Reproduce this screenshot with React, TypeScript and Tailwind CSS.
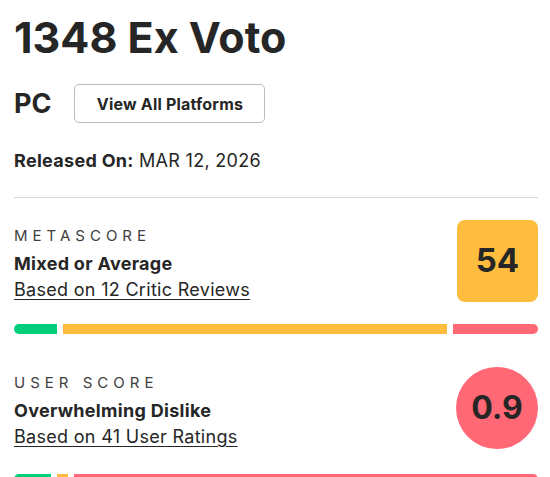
import { memo } from 'react';

const font = { fontFamily: 'Inter, "Open Sans", sans-serif' };

function ScoreBar({ parts }: { parts: { grow: string; color: string }[] }) {
  return (
    <div className="flex h-[10px] gap-[6px] overflow-hidden rounded-full">
      {parts.map((p, i) => (
        <div key={i} className={`${p.grow} ${p.color} h-full`} />
      ))}
    </div>
  );
}

function App() {
  return (
    <div className="min-h-screen bg-white pl-[14px] pr-[12px] pt-[13px] text-[#262626]" style={font}>
      <h1 className="text-[43px] font-bold leading-[48px]">1348 Ex Voto</h1>

      <div className="mt-[23px] flex items-center gap-[23px]">
        <span className="text-[27px] font-bold leading-[32px]">PC</span>
        <button className="h-[39px] w-[191px] rounded-[5px] border border-[#bdbdbd] text-[16px] font-bold tracking-[0.2px] text-[#262626]">
          View All Platforms
        </button>
      </div>

      <div className="mt-[26px] text-[18px] leading-[24px] tracking-[0.3px]">
        <span className="font-bold">Released On:</span> MAR 12, 2026
      </div>

      <div className="mt-[24px] h-px bg-[#d8d8d8]" />

      {/* metascore */}
      <div className="mt-[22px] flex items-start justify-between">
        <div className="pt-[6px]">
          <div className="text-[15px] leading-[20px] tracking-[5px] text-[#404040]">METASCORE</div>
          <div className="mt-[6px] text-[18px] font-bold leading-[24px] tracking-[0.3px]">Mixed or Average</div>
          <a className="mt-[2px] block text-[18px] leading-[24px] tracking-[0.3px] underline underline-offset-[3px]">
            Based on 12 Critic Reviews
          </a>
        </div>
        <div className="flex h-[82px] w-[81px] items-center justify-center rounded-[8px] bg-[#ffbd3f] text-[33px] font-bold">
          54
        </div>
      </div>
      <div className="mt-[22px]">
        <ScoreBar
          parts={[
            { grow: 'flex-[1]', color: 'bg-[#00ce7a]' },
            { grow: 'flex-[9]', color: 'bg-[#ffbd3f]' },
            { grow: 'flex-[2]', color: 'bg-[#ff6874]' },
          ]}
        />
      </div>

      {/* user score */}
      <div className="mt-[33px] flex items-start justify-between">
        <div className="pt-[6px]">
          <div className="text-[15px] leading-[20px] tracking-[5px] text-[#404040]">USER SCORE</div>
          <div className="mt-[6px] text-[18px] font-bold leading-[24px] tracking-[0.3px]">Overwhelming Dislike</div>
          <a className="mt-[2px] block text-[18px] leading-[24px] tracking-[0.3px] underline underline-offset-[3px]">
            Based on 41 User Ratings
          </a>
        </div>
        <div className="flex h-[82px] w-[82px] items-center justify-center rounded-full bg-[#ff6874] text-[32px] font-bold">
          0.9
        </div>
      </div>
      <div className="mt-[25px]">
        <ScoreBar
          parts={[
            { grow: 'flex-[37]', color: 'bg-[#00ce7a]' },
            { grow: 'flex-[11]', color: 'bg-[#ffbd3f]' },
            { grow: 'flex-[464]', color: 'bg-[#ff6874]' },
          ]}
        />
      </div>
    </div>
  );
}

export default memo(App);
